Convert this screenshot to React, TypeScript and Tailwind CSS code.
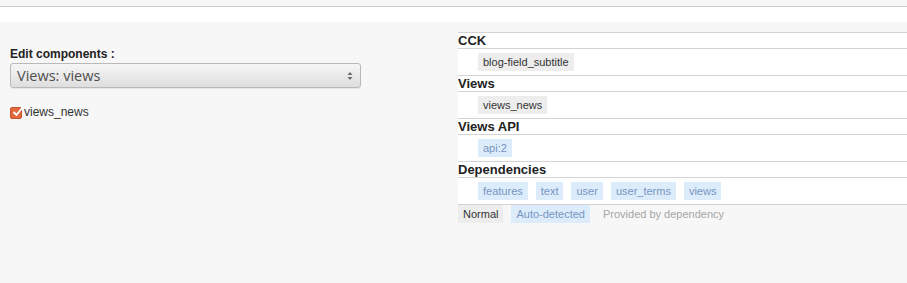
export default function App() {
  const grayTag = "h-[18px] px-[5px] bg-[#ededed] text-[#333] text-[11px] leading-[18px]";
  const blueTag = "h-[18px] px-[5px] bg-[#ddecfb] text-[#7696c2] text-[11px] leading-[18px]";

  const sections = [
    { title: "CCK", tags: [{ label: "blog-field_subtitle", auto: false }] },
    { title: "Views", tags: [{ label: "views_news", auto: false }] },
    { title: "Views API", tags: [{ label: "api:2", auto: true }] },
    {
      title: "Dependencies",
      tags: [
        { label: "features", auto: true },
        { label: "text", auto: true },
        { label: "user", auto: true },
        { label: "user_terms", auto: true },
        { label: "views", auto: true },
      ],
    },
  ];

  return (
    <div className="w-[907px] h-[283px] overflow-hidden bg-[#f7f7f7] font-['Liberation_Sans',Arial,sans-serif]">
      <div className="h-[7px] bg-[#f7f7f7] border-b border-[#cccccc]" />
      <div className="h-[15px] bg-white" />

      <div className="flex">
        {/* left column */}
        <div className="w-[458px] pl-[10px] pt-[25px]">
          <label className="block text-[12px] leading-[15px] font-bold text-[#222] mb-[1px]">
            Edit components :
          </label>
          <div className="relative w-[351px] h-[25px] rounded-[3px] border border-[#b9b9b9] bg-gradient-to-b from-[#f6f6f6] to-[#dedede] shadow-[0_1px_1px_rgba(0,0,0,0.08)]">
            <span className="absolute left-[6px] top-[1px] text-[14.5px] leading-[21px] text-[#4f4f4f] font-['Open_Sans',sans-serif]">
              Views: views
            </span>
            <svg
              className="absolute right-[7px] top-[7px]"
              width="6"
              height="10"
              viewBox="0 0 6 10"
            >
              <path d="M3 1 L5.5 4 L0.5 4 Z" fill="#6b6b6b" />
              <path d="M3 9 L5.5 6 L0.5 6 Z" fill="#6b6b6b" />
            </svg>
          </div>

          <div className="flex items-center mt-[17px] h-[15px]">
            <span className="relative w-[12px] h-[12px] rounded-[2px] bg-[#e2693d] border border-[#c9552c]">
              <svg
                className="absolute left-[1px] -top-[2px]"
                width="12"
                height="12"
                viewBox="0 0 12 12"
              >
                <path
                  d="M1.5 6 L4.5 9 L10.5 1.5"
                  stroke="#ffffff"
                  strokeWidth="1.8"
                  fill="none"
                />
              </svg>
            </span>
            <span className="ml-[2px] text-[12px] leading-[15px] text-[#333]">
              views_news
            </span>
          </div>
        </div>

        {/* right column */}
        <div className="flex-1 pt-[10px]">
          <div className="border-t border-[#d3d3d3]">
            {sections.map((s) => (
              <div key={s.title}>
                <div className="h-[16px] bg-white border-b border-[#d3d3d3] text-[13px] leading-[15px] font-bold text-[#222]">
                  {s.title}
                </div>
                <div className="h-[27px] bg-white border-b border-[#d3d3d3] pl-[20px] pt-[4px] flex gap-[8px]">
                  {s.tags.map((t) => (
                    <span key={t.label} className={t.auto ? blueTag : grayTag}>
                      {t.label}
                    </span>
                  ))}
                </div>
              </div>
            ))}
          </div>
          <div className="flex gap-[8px]">
            <span className={grayTag}>Normal</span>
            <span className={blueTag}>Auto-detected</span>
            <span className="h-[18px] px-[5px] text-[#a6a6a6] text-[11px] leading-[18px]">
              Provided by dependency
            </span>
          </div>
        </div>
      </div>
    </div>
  );
}
